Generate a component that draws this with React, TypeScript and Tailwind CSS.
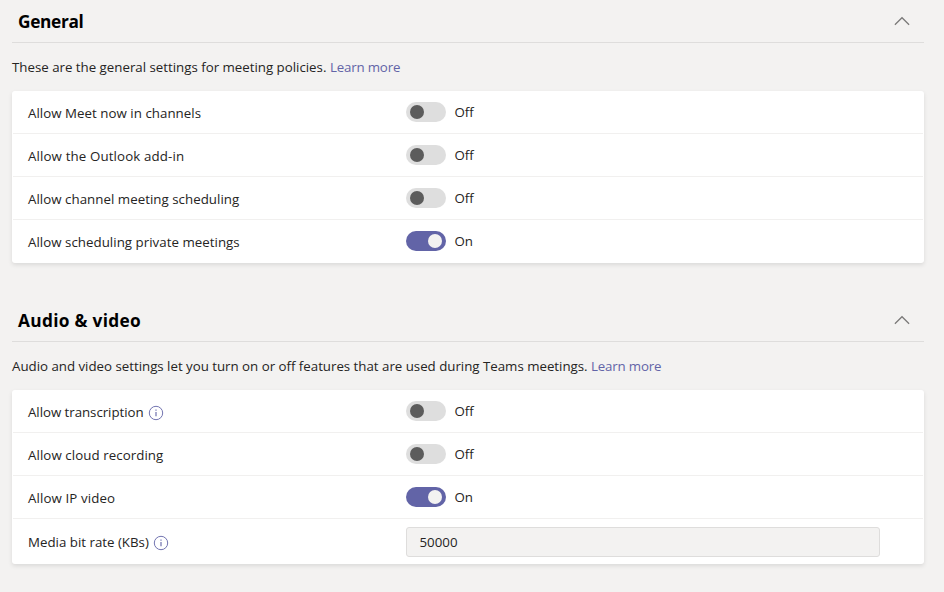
import type { ReactNode } from "react";

function Chevron() {
  return (
    <svg width="16" height="10" viewBox="0 0 16 10" fill="none" stroke="#7a7978" strokeWidth="1.25" className="mr-[14px]">
      <path d="M0.9 8.7 L8 1.7 L15.1 8.7" />
    </svg>
  );
}

function InfoIcon() {
  return (
    <svg width="16" height="16" viewBox="0 0 16 16" fill="none" stroke="#6264a7" className="mt-[2px] ml-1">
      <circle cx="8" cy="8" r="6.7" strokeWidth="0.9" />
      <path d="M8 7V11.2M8 4.6V5.8" strokeWidth="1.1" />
    </svg>
  );
}

function Toggle({ on = false }: { on?: boolean }) {
  return (
    <div className="flex items-center">
      <button
        role="switch"
        aria-checked={on}
        className={
          on
            ? "flex h-5 w-10 items-center justify-end rounded-full bg-[#6264a7] px-1"
            : "flex h-5 w-10 items-center justify-start rounded-full bg-[#dedede] px-1"
        }
      >
        <span className={on ? "size-[14px] rounded-full bg-[#f3f2f1]" : "size-[14px] rounded-full bg-[#5c5c5c]"} />
      </button>
      <span className="ml-[8.5px]">{on ? "On" : "Off"}</span>
    </div>
  );
}

function Row({ label, tracking = "", info = false, children }: { label: string; tracking?: string; info?: boolean; children: ReactNode }) {
  return (
    <div className="mx-px flex h-[43px] items-center border-b border-[#f1f0ef] pl-[15px] last:border-b-0 last:pb-px">
      <div className="flex w-[378px] items-center pt-[2px]">
        <span className={tracking}>{label}</span>
        {info && <InfoIcon />}
      </div>
      {children}
    </div>
  );
}

function Section({ title, titleTracking, intro, introTracking, children }: { title: string; titleTracking: string; intro: string; introTracking: string; children: ReactNode }) {
  return (
    <section>
      <header className="flex h-[43px] items-center justify-between border-b border-[#dedddc] pl-[6px]">
        <h2 className={"pt-[2px] text-[17.3px] leading-6 font-bold text-black " + titleTracking}>{title}</h2>
        <Chevron />
      </header>
      <p className="flex h-12 items-center pb-px">
        <span className={introTracking}>{intro}</span>
        <a className="ml-[3.5px] tracking-[-0.17px] text-[#6264a7]">Learn more</a>
      </p>
      <div className="rounded-[3px] bg-white shadow-[0_2px_4px_rgba(0,0,0,0.1)]">{children}</div>
    </section>
  );
}

export default function App() {
  return (
    <main className="flex h-[592px] w-[944px] flex-col gap-9 overflow-hidden bg-[#f3f2f1] pr-5 pl-3 font-['Open_Sans',sans-serif] text-[13.3px] leading-5 whitespace-nowrap text-[#252423]">
      <Section title="General" titleTracking="tracking-[-0.35px]" intro="These are the general settings for meeting policies." introTracking="tracking-[-0.01px]">
        <Row label="Allow Meet now in channels" tracking="tracking-[0.03px]"><Toggle /></Row>
        <Row label="Allow the Outlook add-in" tracking="tracking-[0.125px]"><Toggle /></Row>
        <Row label="Allow channel meeting scheduling" tracking="tracking-[0.03px]"><Toggle /></Row>
        <Row label="Allow scheduling private meetings" tracking="tracking-[0.03px]"><Toggle on /></Row>
      </Section>
      <Section title="Audio & video" titleTracking="tracking-[0.31px]" intro="Audio and video settings let you turn on or off features that are used during Teams meetings." introTracking="tracking-[-0.016px]">
        <Row label="Allow transcription" tracking="tracking-[-0.05px]" info><Toggle /></Row>
        <Row label="Allow cloud recording" tracking="tracking-[0.07px]"><Toggle /></Row>
        <Row label="Allow IP video" tracking="tracking-[0.1px]"><Toggle on /></Row>
        <div className="flex h-[45px] items-center pl-4">
          <label className="flex w-[378px] items-center pt-px">
            <span>Media bit rate (KBs)</span>
            <InfoIcon />
          </label>
          <div className="mt-px flex h-[30px] w-[474px] items-center rounded-[3px] border border-[#dedddc] bg-[#f3f2f1] pl-[12.5px]">50000</div>
        </div>
      </Section>
    </main>
  );
}
